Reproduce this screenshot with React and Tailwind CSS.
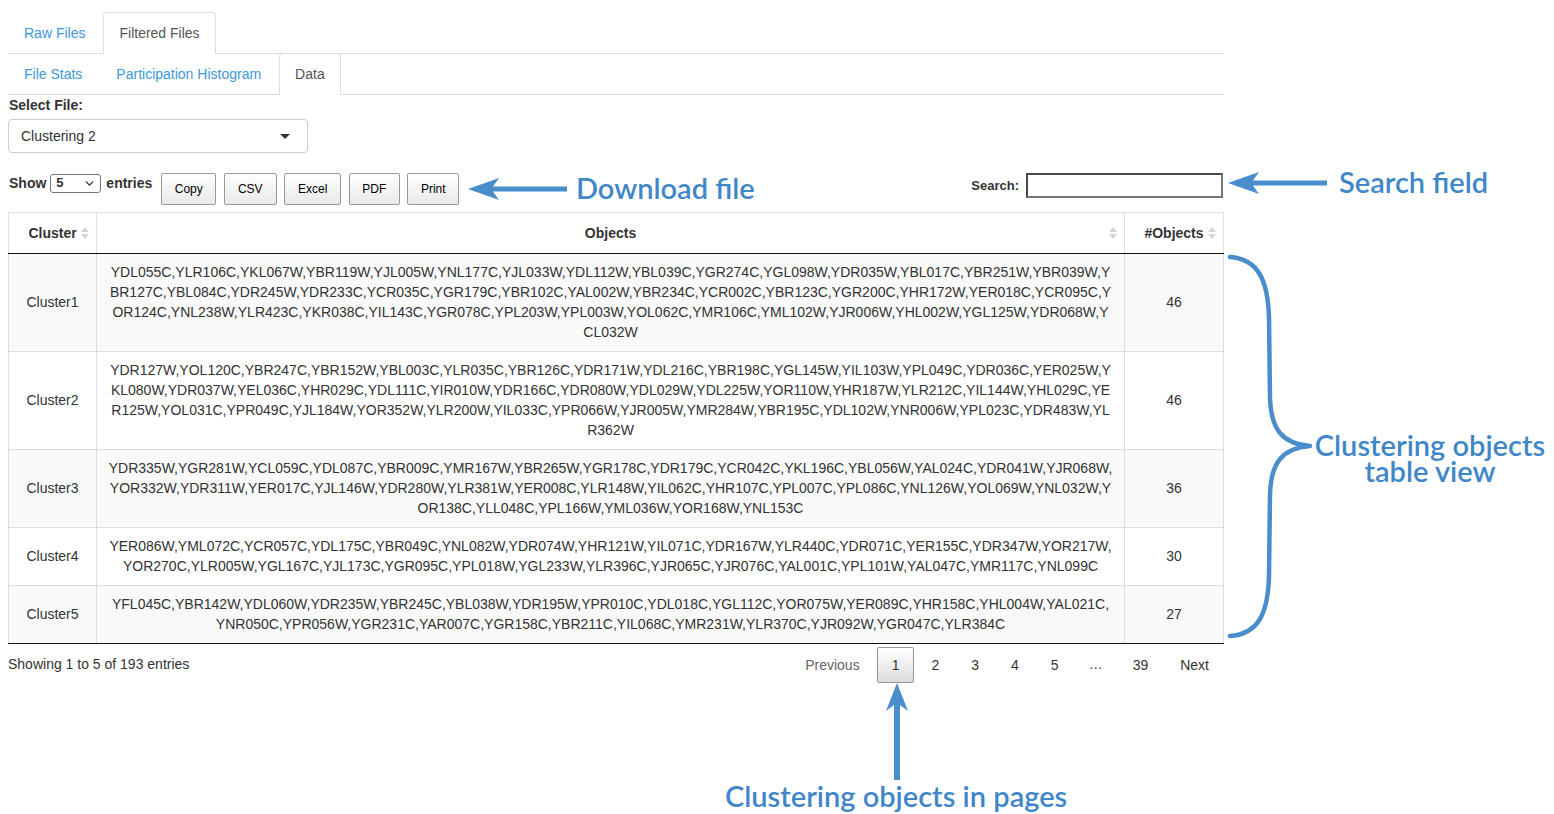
import { ChevronDown } from 'lucide-react';

const rows = [
  {
    name: 'Cluster1',
    count: 46,
    lines: [
      'YDL055C,YLR106C,YKL067W,YBR119W,YJL005W,YNL177C,YJL033W,YDL112W,YBL039C,YGR274C,YGL098W,YDR035W,YBL017C,YBR251W,YBR039W,Y',
      'BR127C,YBL084C,YDR245W,YDR233C,YCR035C,YGR179C,YBR102C,YAL002W,YBR234C,YCR002C,YBR123C,YGR200C,YHR172W,YER018C,YCR095C,Y',
      'OR124C,YNL238W,YLR423C,YKR038C,YIL143C,YGR078C,YPL203W,YPL003W,YOL062C,YMR106C,YML102W,YJR006W,YHL002W,YGL125W,YDR068W,Y',
      'CL032W',
    ],
  },
  {
    name: 'Cluster2',
    count: 46,
    lines: [
      'YDR127W,YOL120C,YBR247C,YBR152W,YBL003C,YLR035C,YBR126C,YDR171W,YDL216C,YBR198C,YGL145W,YIL103W,YPL049C,YDR036C,YER025W,Y',
      'KL080W,YDR037W,YEL036C,YHR029C,YDL111C,YIR010W,YDR166C,YDR080W,YDL029W,YDL225W,YOR110W,YHR187W,YLR212C,YIL144W,YHL029C,YE',
      'R125W,YOL031C,YPR049C,YJL184W,YOR352W,YLR200W,YIL033C,YPR066W,YJR005W,YMR284W,YBR195C,YDL102W,YNR006W,YPL023C,YDR483W,YL',
      'R362W',
    ],
  },
  {
    name: 'Cluster3',
    count: 36,
    lines: [
      'YDR335W,YGR281W,YCL059C,YDL087C,YBR009C,YMR167W,YBR265W,YGR178C,YDR179C,YCR042C,YKL196C,YBL056W,YAL024C,YDR041W,YJR068W,',
      'YOR332W,YDR311W,YER017C,YJL146W,YDR280W,YLR381W,YER008C,YLR148W,YIL062C,YHR107C,YPL007C,YPL086C,YNL126W,YOL069W,YNL032W,Y',
      'OR138C,YLL048C,YPL166W,YML036W,YOR168W,YNL153C',
    ],
  },
  {
    name: 'Cluster4',
    count: 30,
    lines: [
      'YER086W,YML072C,YCR057C,YDL175C,YBR049C,YNL082W,YDR074W,YHR121W,YIL071C,YDR167W,YLR440C,YDR071C,YER155C,YDR347W,YOR217W,',
      'YOR270C,YLR005W,YGL167C,YJL173C,YGR095C,YPL018W,YGL233W,YLR396C,YJR065C,YJR076C,YAL001C,YPL101W,YAL047C,YMR117C,YNL099C',
    ],
  },
  {
    name: 'Cluster5',
    count: 27,
    lines: [
      'YFL045C,YBR142W,YDL060W,YDR235W,YBR245C,YBL038W,YDR195W,YPR010C,YDL018C,YGL112C,YOR075W,YER089C,YHR158C,YHL004W,YAL021C,',
      'YNR050C,YPR056W,YGR231C,YAR007C,YGR158C,YBR211C,YIL068C,YMR231W,YLR370C,YJR092W,YGR047C,YLR384C',
    ],
  },
];

const buttons = [
  { label: 'Copy', w: 'w-[55px]' },
  { label: 'CSV', w: 'w-[53px]' },
  { label: 'Excel', w: 'w-[57px]' },
  { label: 'PDF', w: 'w-[51px]' },
  { label: 'Print', w: 'w-[52px]' },
];

const SortIcon = () => (
  <svg width="8" height="14" viewBox="0 0 8 14" className="absolute right-[7px] top-1/2 -translate-y-1/2">
    <polygon points="4,1 8,6 0,6" fill="#d4d4d4" />
    <polygon points="0,8 8,8 4,13" fill="#d4d4d4" />
  </svg>
);

const Tab = ({ label, active }) => (
  <li className="mr-[2px] -mb-px">
    <span
      className={
        active
          ? 'block px-[15px] py-[10px] leading-5 border border-[#ddd] border-b-white rounded-t-[4px] bg-white text-[#555]'
          : 'block px-[15px] py-[10px] leading-5 border border-transparent text-[#3c99dc]'
      }
    >
      {label}
    </span>
  </li>
);

const PageBtn = ({ children, current, muted }) => (
  <span
    className={
      current
        ? 'ml-[2px] min-w-[36px] px-[14px] py-[7px] leading-5 text-center border border-[#979797] rounded-[2px] bg-gradient-to-b from-white to-[#dcdcdc] text-[#333]'
        : `ml-[2px] min-w-[36px] px-[14px] py-[7px] leading-5 text-center border border-transparent ${muted ? 'text-[#666]' : 'text-[#333]'}`
    }
  >
    {children}
  </span>
);

const Annotations = () => (
  <>
    <svg width="1554" height="814" className="absolute left-0 top-0 pointer-events-none">
      {/* download arrow */}
      <polygon points="468,189 499,178 493,186.5 567,186.5 567,191.5 493,191.5 499,200" fill="#4a8dcc" />
      {/* search arrow */}
      <polygon points="1228,183 1259,172 1253,180.5 1327,180.5 1327,185.5 1253,185.5 1259,194" fill="#4a8dcc" />
      {/* pages arrow */}
      <polygon points="897,683 908,711 900,705 900,780 894,780 894,705 886,711" fill="#4a8dcc" />
      {/* brace */}
      <path
        d="M1230 257 C1258 259 1268 280 1269 318 L1270 398 C1271 430 1283 444 1310 446 C1283 448 1271 462 1270 494 L1269 576 C1268 614 1258 634 1230 636"
        fill="none"
        stroke="#4a8dcc"
        strokeWidth="4.5"
        strokeLinecap="round"
        strokeLinejoin="round"
      />
    </svg>
    <div className="absolute left-[576px] top-[173px] text-[29px] leading-none font-semibold text-[#3f87c9] font-['Lato',sans-serif] whitespace-nowrap">
      Download file
    </div>
    <div className="absolute left-[1339px] top-[167px] text-[29px] leading-none font-semibold text-[#3f87c9] font-['Lato',sans-serif] whitespace-nowrap">
      Search field
    </div>
    <div className="absolute left-[1312px] top-[432px] w-[236px] text-center text-[29px] leading-[26px] font-semibold text-[#3f87c9] font-['Lato',sans-serif] whitespace-nowrap">
      Clustering objects
      <br />
      table view
    </div>
    <div className="absolute left-[725px] top-[781px] text-[29px] leading-none font-semibold text-[#3f87c9] font-['Lato',sans-serif] whitespace-nowrap">
      Clustering objects in pages
    </div>
  </>
);

export default function App() {
  return (
    <div className="relative w-[1554px] h-[814px] overflow-hidden bg-white text-[14px] text-[#333] font-['Liberation_Sans',Arial,sans-serif]">
      <div className="ml-2 w-[1216px]">
        {/* top tabs */}
        <ul className="mt-3 flex border-b border-[#ddd]">
          <Tab label="Raw Files" />
          <Tab label="Filtered Files" active />
        </ul>
        <ul className="-mt-px flex border-b border-[#ddd]">
          <Tab label="File Stats" />
          <Tab label="Participation Histogram" />
          <Tab label="Data" active />
        </ul>

        <div className="pl-px font-bold leading-5">Select File:</div>
        <div className="mt-1 relative w-[300px] h-[34px] border border-[#ccc] rounded-[4px] pl-3 flex items-center">
          Clustering 2
          <span className="absolute right-[17px] top-[14px] w-0 h-0 border-x-[5px] border-x-transparent border-t-[5px] border-t-[#333]" />
        </div>

        {/* toolbar */}
        <div className="mt-5 flex items-start">
          <div className="mt-px h-[18px] flex items-center font-bold pl-px">
            <span>Show</span>
            <div className="ml-[4px] w-[51px] h-[19px] border border-[#767676] rounded-[3px] flex items-center justify-between pl-[5px] pr-[4px] text-[13px]">
              <span>5</span>
              <ChevronDown size={13} strokeWidth={2.6} className="text-[#333]" />
            </div>
            <span className="ml-[5px]">entries</span>
          </div>
          <div className="ml-[9px] flex gap-[7.5px]">
            {buttons.map((b) => (
              <div
                key={b.label}
                className={`${b.w} h-[32px] flex items-center justify-center text-[12px] text-black border border-[#999] rounded-[2px] bg-gradient-to-b from-white to-[#e9e9e9]`}
              >
                {b.label}
              </div>
            ))}
          </div>
          <div className="ml-auto mr-px flex items-center">
            <span className="text-[13px] font-bold mr-[7px]">Search:</span>
            <div className="w-[197px] h-[25px] border-2 border-[#4a4a4a] border-b-[#777] border-r-[#777]" />
          </div>
        </div>

        {/* table */}
        <table className="mt-[7px] w-[1215px] table-fixed border-collapse">
          <colgroup>
            <col className="w-[88px]" />
            <col className="w-[1028px]" />
            <col className="w-[99px]" />
          </colgroup>
          <thead>
            <tr>
              {['Cluster', 'Objects', '#Objects'].map((h) => (
                <th
                  key={h}
                  className="relative py-[10px] px-[18px] leading-5 font-bold text-center border border-[#ddd] border-b-[#111]"
                >
                  {h}
                  <SortIcon />
                </th>
              ))}
            </tr>
          </thead>
          <tbody>
            {rows.map((r, i) => {
              const bg = i % 2 === 0 ? 'bg-[#f9f9f9]' : 'bg-white';
              const last = i === rows.length - 1 ? 'border-b-[#111]' : '';
              return (
                <tr key={r.name} className={bg}>
                  <td className={`px-[10px] pt-2 pb-[9px] leading-5 text-center border border-[#ddd] ${last}`}>{r.name}</td>
                  <td className={`px-[10px] pt-2 pb-[9px] leading-5 text-center border border-[#ddd] whitespace-nowrap ${last}`}>
                    {r.lines.map((l) => (
                      <div key={l}>{l}</div>
                    ))}
                  </td>
                  <td className={`px-[10px] pt-2 pb-[9px] leading-5 text-center border border-[#ddd] ${last}`}>{r.count}</td>
                </tr>
              );
            })}
          </tbody>
        </table>

        {/* footer */}
        <div className="flex justify-between items-start">
          <div className="pt-[10px] leading-5">Showing 1 to 5 of 193 entries</div>
          <div className="pt-[3px] flex">
            <PageBtn muted>Previous</PageBtn>
            <PageBtn current>1</PageBtn>
            <PageBtn>2</PageBtn>
            <PageBtn>3</PageBtn>
            <PageBtn>4</PageBtn>
            <PageBtn>5</PageBtn>
            <span className="ml-[2px] px-[13px] py-[7px] leading-5 text-[#333]">…</span>
            <PageBtn>39</PageBtn>
            <PageBtn>Next</PageBtn>
          </div>
        </div>
      </div>
      <Annotations />
    </div>
  );
}
